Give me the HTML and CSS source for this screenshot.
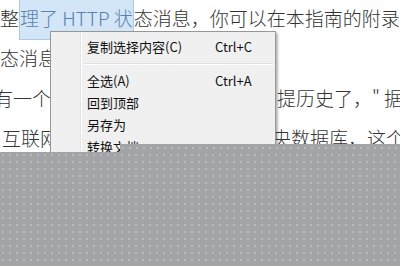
FILE: index.html
```html
<!DOCTYPE html>
<html lang="zh-CN">
<head>
<meta charset="utf-8">
<title>Context menu</title>
<link rel="stylesheet" href="styles.css">
</head>
<body>
<div class="page">
  <div class="article">
    <div class="line l1">整<span class="sel">理了 HTTP 状</span>态消息，你可以在本指南的附录</div>
    <div class="line l2">态消息</div>
    <div class="line split l3"><span class="lt">有一个人</span><span class="rt">提历史了，" 据</span></div>
    <div class="line split l4"><span class="lt">互联网</span><span class="rt">央数据库，这个</span></div>
  </div>

  <div class="menu">
    <div class="item"><span class="label">复制选择内容(C)</span><span class="key">Ctrl+C</span></div>
    <div class="sep"></div>
    <div class="item"><span class="label">全选(A)</span><span class="key">Ctrl+A</span></div>
    <div class="item"><span class="label">回到顶部</span></div>
    <div class="item"><span class="label">另存为</span></div>
    <div class="item"><span class="label">转换文档</span></div>
  </div>

  <div class="shade shade-main"></div>
  <div class="shade shade-step"></div>
</div>
</body>
</html>
```

FILE: styles.css
```css
html, body {
  margin: 0;
  padding: 0;
  background: #ffffff;
}

.page {
  position: relative;
  width: 400px;
  height: 266px;
  overflow: hidden;
  background: #ffffff;
}

.article {
  margin-top: -2px;
  font-family: "Noto Sans CJK SC", "Noto Sans", sans-serif;
  font-size: 19px;
  font-weight: 300;
  color: #333333;
}

.line {
  height: 40px;
  line-height: 40px;
  white-space: nowrap;
}

.l3 {
  margin-left: -6px;
}

.l4 {
  margin-left: 2px;
}

.split {
  display: flex;
}

.lt {
  display: block;
  overflow: hidden;
  flex: none;
}

.l3 .lt {
  width: 283px;
}

.l4 .lt {
  width: 270px;
}

.rt {
  display: block;
  flex: none;
}

.sel {
  background: #d2e6f8;
  border: 1px solid #a9c9e6;
  padding: 6px 0 8px;
  color: #5b80aa;
}

.menu {
  position: absolute;
  left: 50px;
  top: 31px;
  width: 224px;
  padding: 4px 0 4px;
  background-color: #f0f0f0;
  background-image: linear-gradient(to right,
    transparent 29px, #e2e3e3 29px, #e2e3e3 30px,
    #ffffff 30px, #ffffff 31px, transparent 31px);
  border: 1px solid #979797;
  box-shadow: 2px 2px 2px rgba(0, 0, 0, 0.28);
  font-family: "Noto Sans CJK SC", "Noto Sans", sans-serif;
  font-size: 13px;
  color: #111111;
}

.item {
  display: flex;
  height: 22px;
  line-height: 22px;
  padding-left: 36px;
}

.label {
  width: 128px;
  white-space: nowrap;
}

.key {
  white-space: nowrap;
}

.sep {
  height: 1px;
  margin: 5px 2px 5px 32px;
  background: #e0e0e0;
  border-bottom: 1px solid #ffffff;
  box-sizing: content-box;
}

.shade {
  position: absolute;
  right: 0;
  background-color: #a2a4a7;
  background-image: radial-gradient(circle at 3px 3px, #b8babc 0, #b8babc 0.8px, transparent 1.4px);
  background-size: 7px 7px;
}

.shade-main {
  left: 0;
  top: 152px;
  bottom: 0;
}

.shade-step {
  left: 120px;
  top: 144px;
  height: 8px;
  background-position: 0 1px;
}
```
